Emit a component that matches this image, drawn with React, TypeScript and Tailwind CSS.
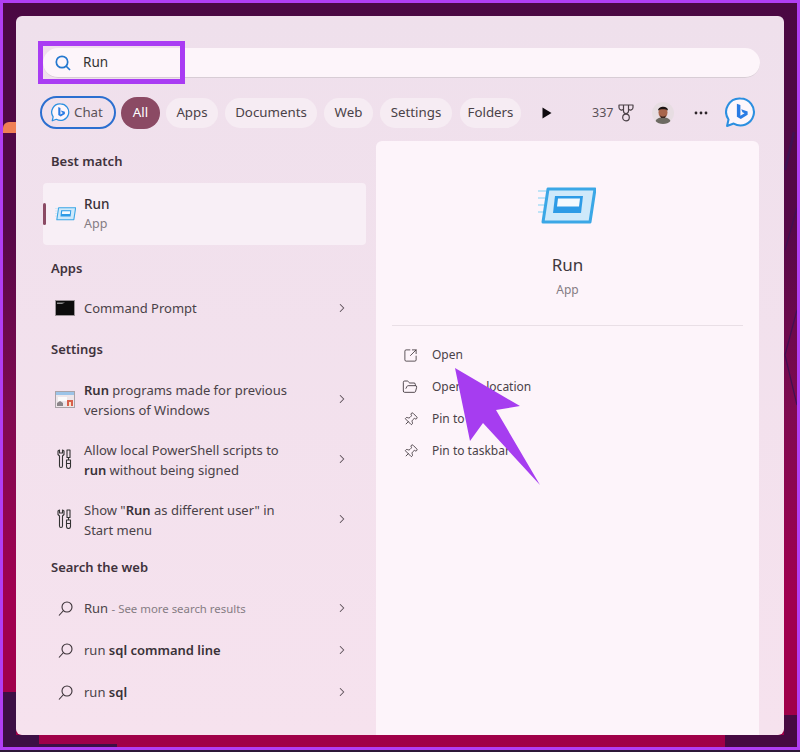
import { ChevronRight, FolderOpen, Pin, SquareArrowOutUpRight } from "lucide-react";
import type { ReactNode } from "react";

function BingBubble({ size }: { size: number }) {
  return (
    <svg width={size} height={size} viewBox="0 0 30 30" fill="none">
      <path
        d="M15 1.500a13 13 0 1 1-6.600 24.200L2 28l1.400-6.200A13 13 0 0 1 15 1.500Z"
        fill="#fdf6fb"
        stroke="#2b8fe0"
        strokeWidth="2"
        strokeLinejoin="round"
      />
      <path d="M11.500 6.500l3.400 1.200v10.400l4-2.300-2-1-1.200-3 6.200 2.200v3.200l-6.600 4-3.800-2.200Z" fill="#2a7be4" />
    </svg>
  );
}

function RunIcon({ size }: { size: number }) {
  return (
    <svg width={size} height={size * 0.64} viewBox="0 0 58 37" fill="none">
      <path d="M0 4h8M0 11h7M0 18h6M0 25h5" stroke="#bfe3f7" strokeWidth="2" />
      <path d="M10 2h47l-5 33H5Z" fill="#cfe9fa" stroke="#3ba7e6" strokeWidth="3" strokeLinejoin="round" />
      <path d="M17 9h28l-2 17H15Z" fill="#2d9be6" />
      <path d="M20 11.500h22l-1 8H19Z" fill="#f4fafe" />
    </svg>
  );
}

function ToolsIcon() {
  return (
    <svg width="15" height="20" viewBox="0 0 15 20" fill="none" stroke="#333" strokeWidth="1.100" className="ml-[2px]">
      <path d="M1 2v3.500l1.500 1.500v10a1.500 1.500 0 0 0 3 0V7L7 5.500V2L5.500 1v3h-3V1Z" strokeLinejoin="round" />
      <path d="M10 1h3v7.500h-3ZM11.500 8.500v2M9.500 11h4v6.500a2 2 0 0 1-4 0ZM9.500 14.500h4" strokeLinejoin="round" />
    </svg>
  );
}

function WindowsIcon() {
  return (
    <svg width="20" height="17" viewBox="0 0 20 17">
      <rect x="0.500" y="0.500" width="19" height="16" fill="#eee6ea" stroke="#a9a3a8" />
      <rect x="1" y="1" width="18" height="3" fill="#9cc4e8" />
      <rect x="3" y="6" width="9" height="4" fill="#fbfbfb" />
      <path d="M2 15v-3l3-2 3 2v3Z" fill="#8b8589" />
      <rect x="12" y="9" width="6" height="6" fill="#d9604c" />
      <rect x="14" y="11" width="2" height="4" fill="#f6e4c8" />
    </svg>
  );
}

function CmdIcon() {
  return (
    <svg width="20" height="16" viewBox="0 0 20 16">
      <rect x="0.500" y="0.500" width="19" height="15" fill="#0c0c0c" stroke="#9b9398" />
      <path d="M2 2.500h8l-3 1.500H2Z" fill="#8e8e8e" />
    </svg>
  );
}

function Trophy() {
  return (
    <svg width="16" height="18" viewBox="0 0 16 18" fill="none" stroke="#4a4046" strokeWidth="1.200">
      <circle cx="8" cy="13.500" r="3.300" />
      <path d="M1 1h14v2.500a2.500 2.500 0 0 1-4.500 1.500v2a2.500 2.500 0 0 1-5 0V5A2.500 2.500 0 0 1 1 3.500ZM5.500 1v4M10.500 1v4" strokeLinejoin="round" />
    </svg>
  );
}

function Avatar() {
  return (
    <svg width="22" height="22" viewBox="0 0 22 22">
      <clipPath id="avatar-clip">
        <circle cx="11" cy="11" r="11" />
      </clipPath>
      <g clipPath="url(#avatar-clip)">
        <rect width="22" height="22" fill="#e7dde2" />
        <path d="M3 22c0-5 3-6.500 8-6.500s8 1.500 8 6.500Z" fill="#6d6a62" />
        <ellipse cx="11" cy="10.500" rx="4.500" ry="5.500" fill="#a8664c" />
        <path d="M6 8.500C6 4 16 3 16 8.500c-2-1.800-8-1.800-10 0Z" fill="#1c1412" />
        <path d="M8 13c1.500 2 4.500 2 6 0l-1 3H9Z" fill="#3a2620" />
      </g>
    </svg>
  );
}

function Chip({ children, className }: { children: ReactNode; className: string }) {
  return (
    <span className={`flex h-[30px] shrink-0 items-center justify-center rounded-full bg-[#f6ecf3] text-[13.300px] text-[#4a4248] ${className}`}>
      {children}
    </span>
  );
}

function Heading({ children, className }: { children: ReactNode; className: string }) {
  return <h2 className={`pl-[8px] text-[13px] leading-[20px] font-semibold text-[#40323c] ${className}`}>{children}</h2>;
}

function Row({
  icon,
  children,
  className,
  textClass,
}: {
  icon: ReactNode;
  children: ReactNode;
  className: string;
  textClass?: string;
}) {
  return (
    <div className={`flex items-center pr-[17px] pl-[12px] text-[13px] leading-[20px] text-[#4a4248] ${className}`}>
      <span className="flex w-[29px] shrink-0 items-center">{icon}</span>
      <span className={`flex-1 ${textClass ?? ""}`}>{children}</span>
      <ChevronRight size={14} strokeWidth={1.800} className="text-[#5c5058]" />
    </div>
  );
}

function WebIcon() {
  return (
    <svg width="15" height="15" viewBox="0 0 15 15" fill="none" stroke="#3b3238" strokeWidth="1.100" className="ml-[3px]">
      <circle cx="9" cy="6" r="5" />
      <path d="M5.500 9.500 1 14.500" />
    </svg>
  );
}

function Action({ icon, label }: { icon: ReactNode; label: string }) {
  return (
    <div className="flex h-[32px] items-center gap-[14px] text-[12px] text-[#4a4248]">
      <span className="flex w-[16px] justify-center text-[#3b3238]">{icon}</span>
      {label}
    </div>
  );
}

export default function App() {
  return (
    <div className="h-[752px] w-[800px] bg-[#2c1838] font-['Noto_Sans',sans-serif]">
      <div className="relative h-[750px] w-[800px] border-[3px] border-[#b13ef4] bg-[linear-gradient(180deg,#4a0843_0%,#560848_30%,#7f0a50_55%,#a00050_80%,#a00048_100%)] pt-[13px] pr-[13px] pb-[12px] pl-[13px]">
        <div className="absolute top-[119px] left-0 h-[11px] w-[13px] rounded-tl-[6px] bg-[#ef7f55]" />
        <div className="absolute bottom-0 left-0 h-[55px] w-[13px] bg-[#3c0f45]" />
        <div className="absolute bottom-0 left-0 h-[12px] w-[36px] bg-[#3c0f45]" />
        <div className="absolute bottom-0 left-0 h-[3px] w-[114px] bg-[#3c0f45]" />
        <div className="absolute right-0 bottom-0 h-[32px] w-[13px] bg-[#470a42]" />
        <div className="absolute right-0 bottom-0 h-[12px] w-[72px] bg-[#470a42]" />
        <svg width="13" height="300" viewBox="0 0 13 300" fill="none" stroke="#3f1052" strokeWidth="1.200" className="absolute top-[117px] right-0">
          <path d="M1 50 10 12" strokeWidth="2.500" />
          <path d="M1 130 13 88M13 190 1 235 13 285" />
        </svg>

        <div className="relative flex h-[719px] w-[768px] flex-col rounded-[6px] bg-[linear-gradient(180deg,#efe0ec,#f6e2ee)] pt-[32px] pr-[24px] pl-[27px]">
          <div className="flex h-[30px] w-[717px] items-center rounded-full border-b border-[#d8cdd5] bg-[#fdf5fa] pl-[12px] text-[13.500px] text-[#333]">
            <svg width="16" height="16" viewBox="0 0 16 16" fill="none" stroke="#2478cf" strokeWidth="1.700">
              <circle cx="7" cy="7" r="5.700" />
              <path d="M11 11l4 4" />
            </svg>
            <span className="ml-[12px]">Run</span>
          </div>

          <div className="mt-[18px] -ml-[3px] flex h-[33px] items-center">
            <span className="flex h-[33px] w-[76px] shrink-0 items-center gap-[4px] rounded-full border-2 border-[#2b6fd0] pl-[9px] text-[13.300px] text-[#5a5258]">
              <BingBubble size={19} />
              Chat
            </span>
            <span className="ml-[5px] flex h-[32px] w-[39px] shrink-0 items-center justify-center rounded-full bg-[#8b4a64] text-[13.300px] text-white">
              All
            </span>
            <div className="ml-[6px] flex gap-[7px]">
              <Chip className="w-[52px]">Apps</Chip>
              <Chip className="w-[92px]">Documents</Chip>
              <Chip className="w-[49px]">Web</Chip>
              <Chip className="w-[72px]">Settings</Chip>
              <Chip className="ml-[1px] w-[61px]">Folders</Chip>
            </div>
            <svg width="10" height="12" viewBox="0 0 10 12" className="ml-[21px] shrink-0">
              <path d="M0.500 0.500 9.500 6 0.500 11.500Z" fill="#0f0a0e" />
            </svg>
            <span className="mt-[1px] ml-[40px] w-[21px] shrink-0 text-[12.500px] text-[#5a5258]">337</span>
            <span className="ml-[5px] shrink-0">
              <Trophy />
            </span>
            <span className="ml-[18px] shrink-0">
              <Avatar />
            </span>
            <span className="ml-[20px] shrink-0 text-[#2d252a]">
              <svg width="14" height="4" viewBox="0 0 14 4" fill="currentColor">
                <circle cx="2" cy="2" r="1.400" />
                <circle cx="7" cy="2" r="1.400" />
                <circle cx="12" cy="2" r="1.400" />
              </svg>
            </span>
            <span className="ml-[17px] shrink-0">
              <BingBubble size={31} />
            </span>
          </div>

          <div className="mt-[12px] flex flex-1 gap-[10px]">
            <div className="w-[323px] pt-[10px]">
              <Heading className="">Best match</Heading>
              <div className="relative mt-[12px] flex h-[62px] items-center rounded-[4px] bg-[#f8eff6] pl-[12px]">
                <span className="absolute top-[20px] left-0 h-[22px] w-[3px] rounded-full bg-[#8b4a64]" />
                <span className="w-[29px]">
                  <RunIcon size={21} />
                </span>
                <div className="flex flex-col text-[13.500px] leading-[20px]">
                  <span className="font-medium text-[#3a3238]">Run</span>
                  <span className="text-[12.500px] text-[#857c83]">App</span>
                </div>
              </div>

              <Heading className="mt-[13px]">Apps</Heading>
              <Row icon={<CmdIcon />} className="mt-[10px] h-[40px]">
                Command Prompt
              </Row>
              <Heading className="mt-[11px]">Settings</Heading>
              <Row icon={<WindowsIcon />} className="mt-[10px] h-[60px]" textClass="mt-[2px]">
                <b className="font-semibold text-[#3a3238]">Run</b> programs made for previous
                <br />
                versions of Windows
              </Row>
              <Row icon={<ToolsIcon />} className="h-[60px]" textClass="mt-[2px]">
                Allow local PowerShell scripts to
                <br />
                <b className="font-semibold text-[#3a3238]">run</b> without being signed
              </Row>
              <Row icon={<ToolsIcon />} className="h-[60px]" textClass="mt-[2px]">
                Show "<b className="font-semibold text-[#3a3238]">Run</b> as different user" in
                <br />
                Start menu
              </Row>
              <Heading className="mt-[8px]">Search the web</Heading>
              <Row icon={<WebIcon />} className="mt-[10px] h-[42px]">
                Run <span className="text-[11.400px] text-[#857c83]">- See more search results</span>
              </Row>
              <Row icon={<WebIcon />} className="h-[42px]">
                run <b className="font-semibold text-[#3a3238]">sql command line</b>
              </Row>
              <Row icon={<WebIcon />} className="h-[42px]">
                run <b className="font-semibold text-[#3a3238]">sql</b>
              </Row>
            </div>

            <div className="flex w-[383px] flex-col rounded-t-[6px] bg-[#fdf4fa] px-[16px]">
              <div className="mt-[46px] flex justify-center pr-[1px]">
                <RunIcon size={58} />
              </div>
              <div className="mt-[29px] text-center text-[17px] leading-[24px] text-[#3f383d]">Run</div>
              <div className="mt-[3px] text-center text-[12px] leading-[20px] text-[#857c83]">App</div>
              <div className="mt-[25px] h-px bg-[#e9dfe6]" />
              <div className="mt-[13px] pl-[10px]">
                <Action icon={<SquareArrowOutUpRight size={15} strokeWidth={1.300} />} label="Open" />
                <Action icon={<FolderOpen size={16} strokeWidth={1.300} />} label="Open file location" />
                <Action icon={<Pin size={15} strokeWidth={1.300} className="rotate-45" />} label="Pin to Start" />
                <Action icon={<Pin size={15} strokeWidth={1.300} className="rotate-45" />} label="Pin to taskbar" />
              </div>
            </div>
          </div>
        </div>

        <div className="absolute top-[38px] left-[35px] h-[43px] w-[147px] border-[5px] border-[#a93cf3]" />
        <svg width="90" height="120" viewBox="0 0 90 120" className="absolute top-[362px] left-[449px]">
          <path d="M3 3 68 41 44 45 88 120 31 58 18 76Z" fill="#a63df0" />
        </svg>
      </div>
    </div>
  );
}
